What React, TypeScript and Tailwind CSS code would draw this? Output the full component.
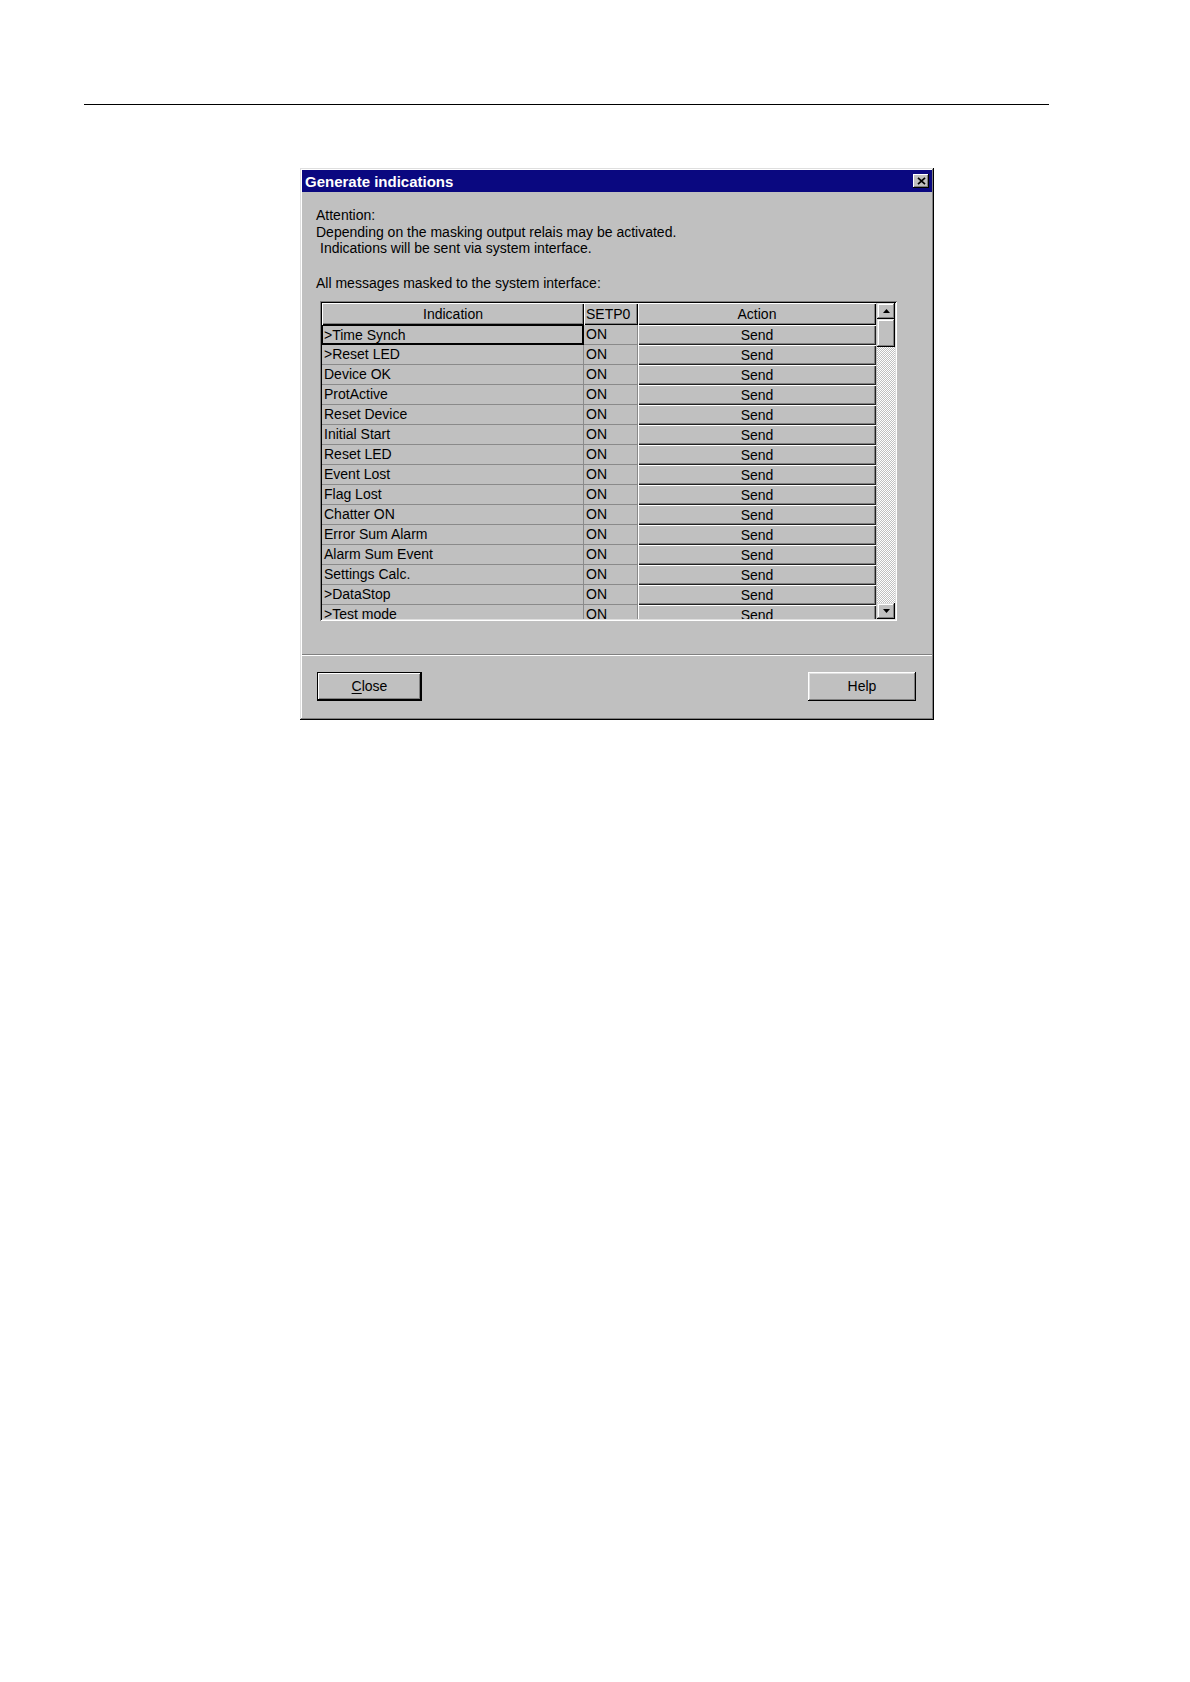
import React from "react";

const rows = [
  ">Time Synch",
  ">Reset LED",
  "Device OK",
  "ProtActive",
  "Reset Device",
  "Initial Start",
  "Reset LED",
  "Event Lost",
  "Flag Lost",
  "Chatter ON",
  "Error Sum Alarm",
  "Alarm Sum Event",
  "Settings Calc.",
  ">DataStop",
  ">Test mode",
];

function UpTri() {
  return (
    <svg width="7" height="4" viewBox="0 0 7 4">
      <path d="M3.5 0L7 4H0z" fill="#000" />
    </svg>
  );
}
function DownTri() {
  return (
    <svg width="7" height="4" viewBox="0 0 7 4">
      <path d="M0 0h7L3.5 4z" fill="#000" />
    </svg>
  );
}

export default function App() {
  return (
    <div className="w-[1190px] h-[1682px] bg-white font-['Liberation_Sans',Arial,sans-serif] text-black overflow-hidden">
      <div className="pt-[104px] pl-[84px]">
        <div className="w-[965px] h-px bg-black" />
      </div>

      <div className="ml-[300px] mt-[63px] w-[634px] h-[552px] bg-[#c0c0c0] p-[2px] flex flex-col shadow-[inset_-1px_-1px_0_#000,inset_1px_1px_0_#dfdfdf,inset_-2px_-2px_0_#808080,inset_2px_2px_0_#fff]">
        {/* Title bar */}
        <div className="h-[22px] shrink-0 bg-[#0a0880] flex items-center justify-between pl-[3px] pr-[3px]">
          <span className="text-white font-bold text-[15px] leading-none">Generate indications</span>
          <div className="w-[16px] h-[14px] bg-[#c0c0c0] flex items-center justify-center shadow-[inset_-1px_-1px_0_#000,inset_1px_1px_0_#fff,inset_-2px_-2px_0_#808080]">
            <svg width="9" height="8" viewBox="0 0 9 8">
              <path d="M1 0.8L8 7.2M8 0.8L1 7.2" stroke="#000" strokeWidth="1.7" />
            </svg>
          </div>
        </div>

        {/* Content */}
        <div className="pl-[14px] pt-[15px] text-[14px] leading-[16.5px]">
          <div>Attention:</div>
          <div>Depending on the masking output relais may be activated.</div>
          <div className="pl-[4px]">Indications will be sent via system interface.</div>
          <div className="mt-[18px]">All messages masked to the system interface:</div>

          <div className="ml-[4px] mt-[10px] w-[577px] h-[320px] p-[2px] flex shadow-[inset_1px_1px_0_#808080,inset_-1px_-1px_0_#fff,inset_2px_2px_0_#000,inset_-2px_-2px_0_#dfdfdf]">
            <div className="w-[555px] h-full overflow-hidden">
              {/* header */}
              <div className="grid grid-cols-[262px_54px_238px] h-[22px]">
                <div className="flex items-center justify-center shadow-[inset_1px_1px_0_#fff,inset_-1px_-1px_0_#000,inset_-2px_-2px_0_#808080]">
                  Indication
                </div>
                <div className="flex items-center pl-[2px] shadow-[inset_1px_1px_0_#fff,inset_-1px_-1px_0_#000,inset_-2px_-2px_0_#808080]">
                  SETP0
                </div>
                <div className="flex items-center justify-center shadow-[inset_1px_1px_0_#fff,inset_-1px_-1px_0_#000,inset_-2px_-2px_0_#808080]">
                  Action
                </div>
              </div>
              {/* rows */}
              {rows.map((r, i) => (
                <div key={i} className="grid grid-cols-[262px_54px_238px] h-[20px]">
                  {i === 0 ? (
                    <div className="flex items-center pl-[2px] whitespace-nowrap shadow-[inset_1px_1px_0_#000,inset_-2px_-2px_0_#000]">
                      {r}
                    </div>
                  ) : (
                    <div className="flex items-center pl-[2px] whitespace-nowrap border-r border-b border-[#8a8a8a]">
                      {r}
                    </div>
                  )}
                  <div className="flex items-center pl-[2px] border-r border-b border-[#8a8a8a]">ON</div>
                  <div className="flex items-center justify-center shadow-[inset_1px_1px_0_#fff,inset_-1px_-1px_0_#202020,inset_-2px_-2px_0_#808080]">
                    Send
                  </div>
                </div>
              ))}
            </div>
            <div className="w-[18px] h-full flex flex-col">
              <div className="h-[16px] shrink-0 bg-[#c0c0c0] flex items-center justify-center shadow-[inset_-1px_-1px_0_#000,inset_1px_1px_0_#dfdfdf,inset_-2px_-2px_0_#808080,inset_2px_2px_0_#fff]">
                <UpTri />
              </div>
              <div className="h-[28px] shrink-0 bg-[#c0c0c0] shadow-[inset_-1px_-1px_0_#000,inset_1px_1px_0_#dfdfdf,inset_-2px_-2px_0_#808080,inset_2px_2px_0_#fff]" />
              <div className="flex-1 bg-[repeating-conic-gradient(#c0c0c0_0_25%,#ffffff_0_50%)] bg-[length:2px_2px]" />
              <div className="h-[16px] shrink-0 bg-[#c0c0c0] flex items-center justify-center shadow-[inset_-1px_-1px_0_#000,inset_1px_1px_0_#dfdfdf,inset_-2px_-2px_0_#808080,inset_2px_2px_0_#fff]">
                <DownTri />
              </div>
            </div>
          </div>
        </div>

        {/* Separator */}
        <div className="mt-[33px] h-[2px] border-t border-t-[#808080] border-b border-b-white" />

        {/* Buttons */}
        <div className="mt-[16px] flex justify-between pl-[15px] pr-[16px] text-[14px]">
          <div className="w-[105px] h-[29px] border border-black flex items-center justify-center shadow-[inset_-1px_-1px_0_#000,inset_1px_1px_0_#fff,inset_-2px_-2px_0_#808080]">
            <span>
              <span className="underline underline-offset-2">C</span>lose
            </span>
          </div>
          <div className="w-[108px] h-[29px] flex items-center justify-center shadow-[inset_-1px_-1px_0_#000,inset_1px_1px_0_#fff,inset_-2px_-2px_0_#808080,inset_2px_2px_0_#dfdfdf]">
            Help
          </div>
        </div>
      </div>
    </div>
  );
}
